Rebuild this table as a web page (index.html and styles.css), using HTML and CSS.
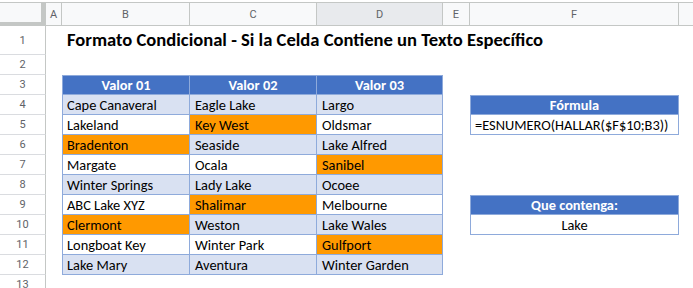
FILE: index.html
```html
<!DOCTYPE html>
<html lang="es">
<head>
<meta charset="utf-8">
<title>Formato Condicional</title>
<link rel="stylesheet" href="styles.css">
</head>
<body>
<div class="sheet">
  <div class="row hdr">
    <div class="corner"></div>
    <div class="col">A</div>
    <div class="col">B</div>
    <div class="col">C</div>
    <div class="col sel">D</div>
    <div class="col">E</div>
    <div class="col">F</div>
    <div class="col last"></div>
  </div>

  <div class="row r1">
    <div class="rn">1</div>
    <div></div>
    <div class="title">Formato Condicional - Si la Celda Contiene un Texto Específico</div>
  </div>

  <div class="row"><div class="rn">2</div></div>

  <div class="row">
    <div class="rn">3</div><div></div>
    <div class="c th first">Valor 01</div>
    <div class="c th">Valor 02</div>
    <div class="c th">Valor 03</div>
  </div>

  <div class="row">
    <div class="rn">4</div><div></div>
    <div class="c s first">Cape Canaveral</div>
    <div class="c s">Eagle Lake</div>
    <div class="c s">Largo</div>
    <div></div>
    <div class="c bh">Fórmula</div>
  </div>

  <div class="row">
    <div class="rn">5</div><div></div>
    <div class="c w first">Lakeland</div>
    <div class="c o">Key West</div>
    <div class="c w">Oldsmar</div>
    <div></div>
    <div class="c bv">=ESNUMERO(HALLAR($F$10;B3))</div>
  </div>

  <div class="row">
    <div class="rn">6</div><div></div>
    <div class="c o first">Bradenton</div>
    <div class="c s">Seaside</div>
    <div class="c s">Lake Alfred</div>
  </div>

  <div class="row">
    <div class="rn">7</div><div></div>
    <div class="c w first">Margate</div>
    <div class="c w">Ocala</div>
    <div class="c o">Sanibel</div>
  </div>

  <div class="row">
    <div class="rn">8</div><div></div>
    <div class="c s first">Winter Springs</div>
    <div class="c s">Lady Lake</div>
    <div class="c s">Ocoee</div>
  </div>

  <div class="row">
    <div class="rn">9</div><div></div>
    <div class="c w first">ABC Lake XYZ</div>
    <div class="c o">Shalimar</div>
    <div class="c w">Melbourne</div>
    <div></div>
    <div class="c bh">Que contenga:</div>
  </div>

  <div class="row">
    <div class="rn">10</div><div></div>
    <div class="c o first">Clermont</div>
    <div class="c s">Weston</div>
    <div class="c s">Lake Wales</div>
    <div></div>
    <div class="c bv center">Lake</div>
  </div>

  <div class="row">
    <div class="rn">11</div><div></div>
    <div class="c w first">Longboat Key</div>
    <div class="c w">Winter Park</div>
    <div class="c o">Gulfport</div>
  </div>

  <div class="row">
    <div class="rn">12</div><div></div>
    <div class="c s first">Lake Mary</div>
    <div class="c s">Aventura</div>
    <div class="c s">Winter Garden</div>
  </div>

  <div class="row"><div class="rn">13</div></div>
</div>
</body>
</html>
```

FILE: styles.css
```css
html, body {
  margin: 0;
  padding: 0;
  background: #ffffff;
}

body {
  font-family: "Carlito", "Calibri", Lato, "Noto Sans", sans-serif;
  color: #000000;
  overflow: hidden;
}

.sheet {
  padding-top: 2px;
}

.row {
  display: grid;
  grid-template-columns: 46px 16px 128px 127px 126px 27px 209px 1fr;
  height: 20px;
}

.row.hdr { height: 24px; }
.row.r1 { height: 29px; }

.corner {
  background: #f8f9fa;
  border-top: 1px solid #c4c7c5;
  border-right: 5px solid #c4c7c5;
  border-bottom: 4px solid #c4c7c5;
}

.col {
  background: #f8f9fa;
  border-top: 1px solid #c4c7c5;
  border-bottom: 1px solid #c4c7c5;
  border-right: 1px solid #c4c7c5;
  font-family: Roboto, Arial, sans-serif;
  font-size: 11px;
  color: #5f6368;
  display: flex;
  align-items: center;
  justify-content: center;
}

.col.sel { background: #e8eaed; }
.col.last { border-right: none; }

.rn {
  border-right: 1px solid #c4c7c5;
  border-bottom: 1px solid #dadce0;
  font-family: Roboto, Arial, sans-serif;
  font-size: 11px;
  color: #5f6368;
  display: flex;
  align-items: center;
  justify-content: center;
}

.title {
  grid-column: 3 / 8;
  font-weight: 700;
  font-size: 18.6px;
  padding-left: 5px;
  display: flex;
  align-items: flex-end;
  padding-bottom: 4px;
  white-space: nowrap;
}

.c {
  font-size: 14.4px;
  line-height: 19px;
  padding-top: 1px;
  padding-left: 5px;
  border-right: 1px solid #8eaadb;
  border-bottom: 1px solid #8eaadb;
  white-space: nowrap;
  overflow: hidden;
}

.c.first { border-left: 1px solid #8eaadb; padding-left: 4px; }

.th, .bh {
  background: #4472c4;
  color: #ffffff;
  font-weight: 700;
  text-align: center;
  padding-left: 0;
  padding-top: 0;
  border-top: 1px solid #8eaadb;
  line-height: 18px;
}

.th.first { padding-left: 0; }

.bh { border-left: 1px solid #8eaadb; }
.bv { background: #ffffff; border-left: 1px solid #8eaadb; padding-left: 4px; }
.bv.center { text-align: center; padding-left: 0; }

.s { background: #d9e1f2; }
.w { background: #ffffff; }
.o { background: #ff9900; }
```
